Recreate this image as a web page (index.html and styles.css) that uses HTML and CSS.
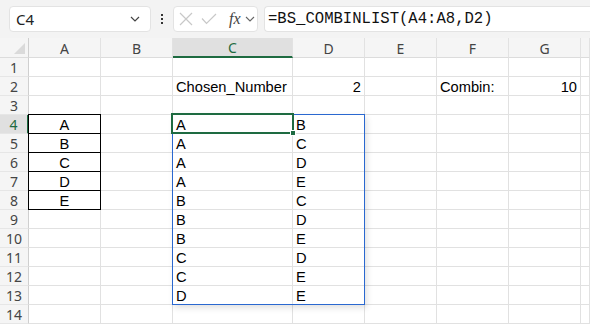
FILE: index.html
```html
<!DOCTYPE html>
<html>
<head>
<meta charset="utf-8">
<link rel="stylesheet" href="styles.css">
</head>
<body>
<div class="toolbar">
  <div class="namebox">
    <span class="name">C4</span>
    <svg class="chev" width="10" height="6" viewBox="0 0 10 6"><path d="M1 1 L5 5 L9 1" fill="none" stroke="#444" stroke-width="1.2"/></svg>
  </div>
  <div class="dots"><i></i><i></i><i></i></div>
  <div class="fxbox">
    <svg width="14" height="14" viewBox="0 0 14 14"><path d="M1 1 L13 13 M13 1 L1 13" stroke="#c8c8c8" stroke-width="1.2" fill="none"/></svg>
    <svg width="16" height="12" viewBox="0 0 16 12"><path d="M1 5.5 L5.5 10.5 L15 1" stroke="#c8c8c8" stroke-width="1.2" fill="none"/></svg>
    <span class="fx">fx</span>
    <svg width="10" height="6" viewBox="0 0 10 6"><path d="M1 1 L5 5 L9 1" fill="none" stroke="#666" stroke-width="1.1"/></svg>
  </div>
  <div class="formula">=BS_COMBINLIST(A4:A8,D2)</div>
</div>
<div class="sheet">
  <div class="grid">
    <div class="hd corner"><span class="tri"></span></div>
    <div class="hd col">A</div><div class="hd col">B</div><div class="hd col sel">C</div><div class="hd col">D</div><div class="hd col">E</div><div class="hd col">F</div><div class="hd col">G</div><div class="hd col"></div>

    <div class="hd row">1</div><div class="c"></div><div class="c"></div><div class="c"></div><div class="c"></div><div class="c"></div><div class="c"></div><div class="c"></div><div class="c"></div>
    <div class="hd row">2</div><div class="c"></div><div class="c"></div><div class="c">Chosen_Number</div><div class="c r">2</div><div class="c"></div><div class="c">Combin:</div><div class="c r">10</div><div class="c"></div>
    <div class="hd row">3</div><div class="c"></div><div class="c"></div><div class="c"></div><div class="c"></div><div class="c"></div><div class="c"></div><div class="c"></div><div class="c"></div>
    <div class="hd row rsel">4</div><div class="c m bx bt">A</div><div class="c"></div><div class="c">A</div><div class="c">B</div><div class="c"></div><div class="c"></div><div class="c"></div><div class="c"></div>
    <div class="hd row">5</div><div class="c m bx">B</div><div class="c"></div><div class="c">A</div><div class="c">C</div><div class="c"></div><div class="c"></div><div class="c"></div><div class="c"></div>
    <div class="hd row">6</div><div class="c m bx">C</div><div class="c"></div><div class="c">A</div><div class="c">D</div><div class="c"></div><div class="c"></div><div class="c"></div><div class="c"></div>
    <div class="hd row">7</div><div class="c m bx">D</div><div class="c"></div><div class="c">A</div><div class="c">E</div><div class="c"></div><div class="c"></div><div class="c"></div><div class="c"></div>
    <div class="hd row">8</div><div class="c m bx">E</div><div class="c"></div><div class="c">B</div><div class="c">C</div><div class="c"></div><div class="c"></div><div class="c"></div><div class="c"></div>
    <div class="hd row">9</div><div class="c"></div><div class="c"></div><div class="c">B</div><div class="c">D</div><div class="c"></div><div class="c"></div><div class="c"></div><div class="c"></div>
    <div class="hd row">10</div><div class="c"></div><div class="c"></div><div class="c">B</div><div class="c">E</div><div class="c"></div><div class="c"></div><div class="c"></div><div class="c"></div>
    <div class="hd row">11</div><div class="c"></div><div class="c"></div><div class="c">C</div><div class="c">D</div><div class="c"></div><div class="c"></div><div class="c"></div><div class="c"></div>
    <div class="hd row">12</div><div class="c"></div><div class="c"></div><div class="c">C</div><div class="c">E</div><div class="c"></div><div class="c"></div><div class="c"></div><div class="c"></div>
    <div class="hd row">13</div><div class="c"></div><div class="c"></div><div class="c">D</div><div class="c">E</div><div class="c"></div><div class="c"></div><div class="c"></div><div class="c"></div>
    <div class="hd row">14</div><div class="c"></div><div class="c"></div><div class="c"></div><div class="c"></div><div class="c"></div><div class="c"></div><div class="c"></div><div class="c"></div>
  </div>
  <div class="spill"></div>
  <div class="active"><span class="handle"></span></div>
</div>
</body>
</html>
```
FILE: styles.css
```css
* { box-sizing: border-box; }
html, body { margin: 0; padding: 0; }
body {
  width: 590px;
  height: 326px;
  overflow: hidden;
  background: #fff;
  font-family: "Liberation Sans", Arial, sans-serif;
}
.toolbar {
  height: 38px;
  background: #f3f3f3;
  display: flex;
  align-items: flex-start;
  padding: 6px 0 0 9px;
  overflow: hidden;
}
.namebox {
  width: 142px;
  height: 26px;
  background: #fff;
  border: 1px solid #e3e3e3;
  border-radius: 4px;
  display: flex;
  align-items: center;
  justify-content: space-between;
  padding: 0 10px 0 6px;
}
.name {
  font-family: "Noto Sans", "Open Sans", sans-serif;
  font-size: 15px;
  color: #222;
}
.dots {
  width: 22px;
  height: 26px;
  display: flex;
  flex-direction: column;
  align-items: center;
  justify-content: center;
  gap: 2px;
}
.dots i {
  display: block;
  width: 2px;
  height: 2px;
  background: #333;
}
.fxbox {
  width: 85px;
  height: 26px;
  background: #fff;
  border: 1px solid #e3e3e3;
  border-radius: 4px;
  display: flex;
  align-items: center;
  padding: 0 0 0 5px;
  gap: 7px;
}
.fxbox svg:nth-child(2) { margin-left: 1px; }
.fx {
  font-family: "Liberation Serif", serif;
  font-style: italic;
  font-size: 16px;
  color: #444;
  margin-left: 5px;
  margin-right: -3px;
}
.formula {
  flex: 1;
  margin-left: 6px;
  height: 26px;
  background: #fff;
  border: 1px solid #e3e3e3;
  border-right: none;
  border-radius: 4px 0 0 4px;
  font-family: "Liberation Mono", "DejaVu Sans Mono", monospace;
  font-size: 15.6px;
  line-height: 24px;
  padding-left: 3px;
  color: #111;
  white-space: nowrap;
}
.sheet { position: relative; overflow: hidden; }
.grid {
  display: grid;
  grid-template-columns: 29px 72px 72px 120px 72px 72px 72px 72px 9px;
  grid-template-rows: 20px repeat(14, 19px);
}
.hd {
  background: #f5f5f5;
  color: #444;
  font-family: "Noto Sans", "Open Sans", sans-serif;
  font-size: 14px;
  display: flex;
  align-items: center;
  justify-content: center;
  border-right: 1px solid #dcdcdc;
  border-bottom: 1px solid #dcdcdc;
}
.hd.col { border-right-color: #e2e2e2; padding-top: 1px; }
.hd.col.sel {
  background: #e0e0e0;
  color: #1e6b41;
  border-bottom: 2px solid #1e6b41;
}
.hd.row { padding-top: 1px; border-right: 1px solid #cfcfcf; border-bottom-color: #e6e6e6; }
.hd.row.rsel {
  background: #e0e0e0;
  color: #1e6b41;
  border-right: 2px solid #1e6b41;
}
.corner { position: relative; border-right: 1px solid #cfcfcf; }
.tri {
  position: absolute;
  right: 3px;
  bottom: 3px;
  width: 0;
  height: 0;
  border-left: 11px solid transparent;
  border-bottom: 11px solid #dadada;
}
.c {
  border-right: 1px solid #e1e1e1;
  border-bottom: 1px solid #e1e1e1;
  font-size: 14.67px;
  color: #000;
  line-height: 18px;
  padding: 1px 3px 0 3px;
  white-space: nowrap;
  overflow: visible;
}
.c.r { text-align: right; }
.c.m { text-align: center; }
.c.bx {
  border-right: 1px solid #000;
  border-bottom: 1px solid #000;
  border-left: 1px solid #000;
  margin-left: -1px;
}
.c.bt {
  border-top: 1px solid #000;
  margin-top: -1px;
}
.spill {
  position: absolute;
  left: 172px;
  top: 76px;
  width: 193px;
  height: 191px;
  border: 1px solid #2a68d0;
  box-shadow: 2px 3px 6px rgba(0,0,0,0.12);
}
.active {
  position: absolute;
  left: 171px;
  top: 75px;
  width: 123px;
  height: 21px;
  border: 2px solid #1e6b41;
}
.handle {
  position: absolute;
  right: -4px;
  bottom: -4px;
  width: 6px;
  height: 6px;
  background: #1e6b41;
  border: 1px solid #fff;
}
```
